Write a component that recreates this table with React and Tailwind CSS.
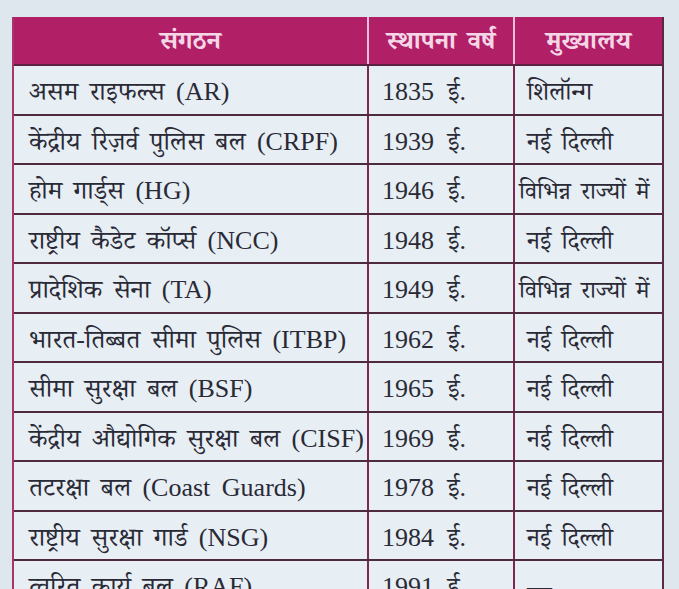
import React from "react";

const rows = [
  ["असम राइफल्स (AR)", "1835 ई.", "शिलॉन्ग"],
  ["केंद्रीय रिज़र्व पुलिस बल (CRPF)", "1939 ई.", "नई दिल्ली"],
  ["होम गार्ड्स (HG)", "1946 ई.", "विभिन्न राज्यों में"],
  ["राष्ट्रीय कैडेट कॉर्प्स (NCC)", "1948 ई.", "नई दिल्ली"],
  ["प्रादेशिक सेना (TA)", "1949 ई.", "विभिन्न राज्यों में"],
  ["भारत-तिब्बत सीमा पुलिस (ITBP)", "1962 ई.", "नई दिल्ली"],
  ["सीमा सुरक्षा बल (BSF)", "1965 ई.", "नई दिल्ली"],
  ["केंद्रीय औद्योगिक सुरक्षा बल (CISF)", "1969 ई.", "नई दिल्ली"],
  ["तटरक्षा बल (Coast Guards)", "1978 ई.", "नई दिल्ली"],
  ["राष्ट्रीय सुरक्षा गार्ड (NSG)", "1984 ई.", "नई दिल्ली"],
  ["त्वरित कार्य बल (RAF)", "1991 ई.", "—"],
];

const font = {
  fontFamily:
    '"Liberation Serif", "Noto Serif Devanagari", "Noto Sans Devanagari", "Lohit Devanagari", serif',
};

export default function App() {
  return (
    <div className="h-[589px] w-[679px] overflow-hidden bg-[#dfe7ee] pt-[17px] pl-[12px]" style={font}>
      <div className="w-[652px] border-l-2 border-r-2 border-l-[#a8346e] border-r-[#5a2a44]">
        <div className="grid h-[49px] grid-cols-[355px_146px_147px] bg-[#b11f66] text-[26px] font-bold text-[#f4d6e6] border-b-2 border-[#5a2240] [word-spacing:5px]">
          <div className="flex items-center justify-center border-r-2 border-[#f0c0d8]">संगठन</div>
          <div className="flex items-center justify-center border-r-2 border-[#f0c0d8]">स्थापना वर्ष</div>
          <div className="flex items-center justify-center">मुख्यालय</div>
        </div>
        {rows.map((r, i) => (
          <div
            key={i}
            className="grid h-[49.5px] grid-cols-[355px_146px_147px] bg-[#e7eef4] text-[26px] text-[#2a2a36] border-b-2 border-[#4f2a3e]"
          >
            <div className="flex items-center whitespace-nowrap border-r-2 border-[#7a2852] pl-[15px] pt-[4px] [word-spacing:5px]">
              {r[0]}
            </div>
            <div className="flex items-center whitespace-nowrap border-r-2 border-[#7a2852] pl-[13px] pt-[4px] [word-spacing:7px]">
              {r[1]}
            </div>
            <div
              className={
                "flex items-center whitespace-nowrap pt-[4px] [word-spacing:4px] " +
                (r[2].length > 10 ? "pl-[4px] text-[24px]" : "pl-[12px] text-[25px]")
              }
            >
              {r[2]}
            </div>
          </div>
        ))}
      </div>
    </div>
  );
}
